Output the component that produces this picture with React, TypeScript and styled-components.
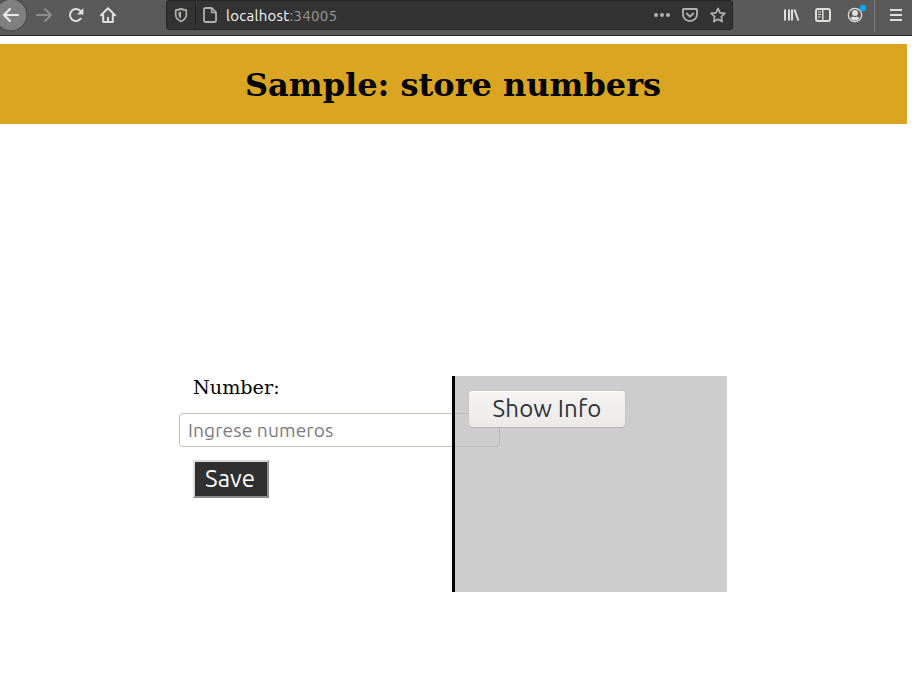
import React from "react";
import styled, { createGlobalStyle } from "styled-components";

const GlobalStyle = createGlobalStyle`
  * { box-sizing: border-box; }
  body { margin: 0; background: #fff; overflow: hidden; }
`;

const UI_FONT = '"Ubuntu", "Noto Sans", sans-serif';

const Window = styled.div`
  height: 697px;
  overflow: hidden;
`;

const Toolbar = styled.nav`
  display: flex;
  align-items: flex-start;
  height: 36px;
  background: #5a5a5a;
  border-bottom: 1px solid #222;
`;

const Icon = styled.svg<{ $gap?: number; $dim?: boolean }>`
  display: block;
  flex: none;
  width: 16px;
  height: 16px;
  margin: 7px 0 0 ${(p) => p.$gap ?? 16}px;
  overflow: visible;
  fill: none;
  stroke: ${(p) => (p.$dim ? "#8e8e8e" : "#e0e0df")};
  stroke-width: 2;
  stroke-linecap: round;
  stroke-linejoin: round;
`;

const BackButton = styled.svg`
  display: block;
  flex: none;
  width: 28px;
  height: 32px;
`;

const UrlBar = styled.div`
  display: flex;
  width: 567px;
  height: 30px;
  margin: 0 34px 0 50px;
  padding-right: 6px;
  background: #333;
  border: 1px solid #252525;
  border-radius: 3px;

  ${Icon} {
    margin-top: 6px;
    stroke: #b1b1b0;
  }
`;

const UrlDivider = styled.span`
  width: 1px;
  height: 22px;
  margin: 3px 0 0 6px;
  background: #202020;
`;

const Url = styled.span`
  flex: 1;
  margin: 0 0 0 8px;
  font: 15px/29px ${UI_FONT};
  letter-spacing: 0.28px;
  color: #f8f8f8;
  white-space: nowrap;

  span { color: #9b9b9b; }
`;

const ToolbarDivider = styled.span`
  width: 1px;
  height: 32px;
  margin-left: 11px;
  background: #7c7c7c;
`;

const Banner = styled.header`
  width: 907px;
  height: 80px;
  margin-top: 8px;
  padding: 1px 1px 0 0;
  background: #daa520;
`;

const Title = styled.h1`
  margin: 0;
  font: bold 32px/80px "DejaVu Serif", serif;
  text-align: center;
  color: #000;
`;

const Main = styled.main`
  display: flex;
  width: 548px;
  height: 216px;
  margin: 252px 0 0 179px;
`;

const Form = styled.form`
  display: flex;
  flex-direction: column;
  align-items: flex-start;
  width: 273px;
`;

const Label = styled.label`
  margin: 0 0 14px 14px;
  font: 19.2px/23px "DejaVu Serif", serif;
  color: #000;
`;

const NumberInput = styled.input`
  flex: none;
  width: 321px;
  height: 34px;
  padding: 0 8px 1px;
  border: 1px solid #c6c1bb;
  border-radius: 4px;
  background: #fff;
  font: 19.2px ${UI_FONT};
  letter-spacing: 0.1px;

  &::placeholder { color: #7b7b7b; opacity: 1; }
`;

const SaveButton = styled.button`
  width: 76px;
  height: 38px;
  margin: 13px 0 0 14px;
  padding: 0 2px 0 0;
  border: 2px solid;
  border-color: #dcdcdc #8c8c8c #8c8c8c #dcdcdc;
  background: #303030;
  color: #fff;
  font: 24px/34px ${UI_FONT};
`;

/* Translucent, so the end of the wide input shows through. */
const InfoPanel = styled.section`
  position: relative;
  flex: 1;
  padding: 15px 14px;
  border-left: 3px solid #000;
  background: rgba(178, 178, 178, 0.65);
`;

const ShowButton = styled.button`
  display: block;
  width: 156px;
  height: 36px;
  padding: 0;
  border: 0;
  border-radius: 4px;
  background: linear-gradient(#f5f4f3, #ebeae8);
  box-shadow: 0 1px 0 #b8b2a9, 0 0 0 1px #c9c5bf, inset 0 1px 0 #fff;
  color: #2e3436;
  font: 24px/36px ${UI_FONT};
  letter-spacing: 0.15px;
`;

const App = () => (
  <>
    <GlobalStyle />
    <Window>
      <Toolbar>
        <BackButton viewBox="0 0 28 32">
          <circle cx="11" cy="15" r="16" fill="#808080" stroke="#434343" />
          <path d="M18 15H4M10 9l-6 6 6 6" fill="none" stroke="#e8e8e8" strokeWidth="2.2" strokeLinecap="round" strokeLinejoin="round" />
        </BackButton>
        <Icon $gap={8} $dim><path d="M1 8h14M9 2l6 6-6 6" /></Icon>
        <Icon>
          <path d="M12.7 11.7A6 6 0 1 1 12.6 4.2" />
          <path d="M15.4 1v6.5H9z" fill="#e0e0df" stroke="none" />
        </Icon>
        <Icon><path d="M1 8.2 8 1.3l7 6.9M3.2 8v7h9.6V8M8 15v-4.2" /></Icon>
        <UrlBar>
          <Icon $gap={6}>
            <path d="M8 1.9c2 .9 3.4 1.1 5.3 1.1v4.7c0 3-2.1 5.3-5.3 6.8-3.2-1.5-5.3-3.8-5.3-6.8V3C4.6 3 6 2.8 8 1.9z" strokeWidth="1.7" />
            <path d="M8 4.6v7.2C6.2 10.6 5.500 9.400 5.500 7.600V5.300z" fill="#b1b1b0" stroke="none" />
          </Icon>
          <UrlDivider />
          <Icon $gap={6}>
            <path d="M3.6 1h5.9l4.500 4.500v8a1.500 1.500 0 0 1-1.500 1.500h-9A1.500 1.500 0 0 1 2 13.500v-11A1.500 1.500 0 0 1 3.600 1z" strokeWidth="1.8" />
            <path d="M9.500 1v4.600H14" strokeWidth="1.3" />
          </Icon>
          <Url>localhost<span>:34005</span></Url>
          <Icon $gap={0}>
            <g fill="#b1b1b0" stroke="none"><circle cx="2" cy="8" r="2" /><circle cx="8" cy="8" r="2" /><circle cx="14" cy="8" r="2" /></g>
          </Icon>
          <Icon $gap={12}><path d="M1.8 2h12.4q.8 0 .8.8V7.500a7 6.500 0 0 1-14 0V2.800q0-.8.8-.8zM4.800 6.500 8 9.700l3.200-3.200" strokeWidth="1.9" /></Icon>
          <Icon $gap={12}><path d="m8 1.3 2 4.500 4.900.6-3.600 3.300.9 4.900L8 12.200l-4.200 2.400.9-4.900L1.100 6.400 6 5.800z" strokeWidth="1.7" /></Icon>
        </UrlBar>
        <Icon><path d="M2 2.500v11M6 2.500v11M9 2.500v11M11.400 2.500l4 11" strokeLinecap="butt" /></Icon>
        <Icon>
          <rect x="1" y="2" width="14" height="12" rx="2" />
          <path d="M7.800 2v12" strokeWidth="1.5" />
          <path d="M3 5h3M3 7.500h3M3 10h2.500" strokeWidth="1" strokeLinecap="butt" />
        </Icon>
        <Icon>
          <circle cx="8" cy="8" r="6.7" strokeWidth="1.2" />
          <circle cx="8" cy="6" r="3" fill="#e0e0df" stroke="none" />
          <path d="M3.300 10.800q2-.8 3-1.300 1.700 1 3.400 0 1 .5 3 1.300Q11 13.500 8 13.500t-4.700-2.700z" fill="#e0e0df" stroke="none" />
          <circle cx="16" cy="1" r="3.2" fill="#00a8f5" stroke="none" />
        </Icon>
        <ToolbarDivider />
        <Icon $gap={13}><path d="M2 3h12M2 8h12M2 13h12" strokeLinecap="butt" /></Icon>
      </Toolbar>
      <Banner><Title>Sample: store numbers</Title></Banner>
      <Main>
        <Form onSubmit={(e) => e.preventDefault()}>
          <Label htmlFor="number">Number:</Label>
          <NumberInput id="number" placeholder="Ingrese numeros" />
          <SaveButton type="submit">Save</SaveButton>
        </Form>
        <InfoPanel><ShowButton type="button">Show Info</ShowButton></InfoPanel>
      </Main>
    </Window>
  </>
);

export default App;
